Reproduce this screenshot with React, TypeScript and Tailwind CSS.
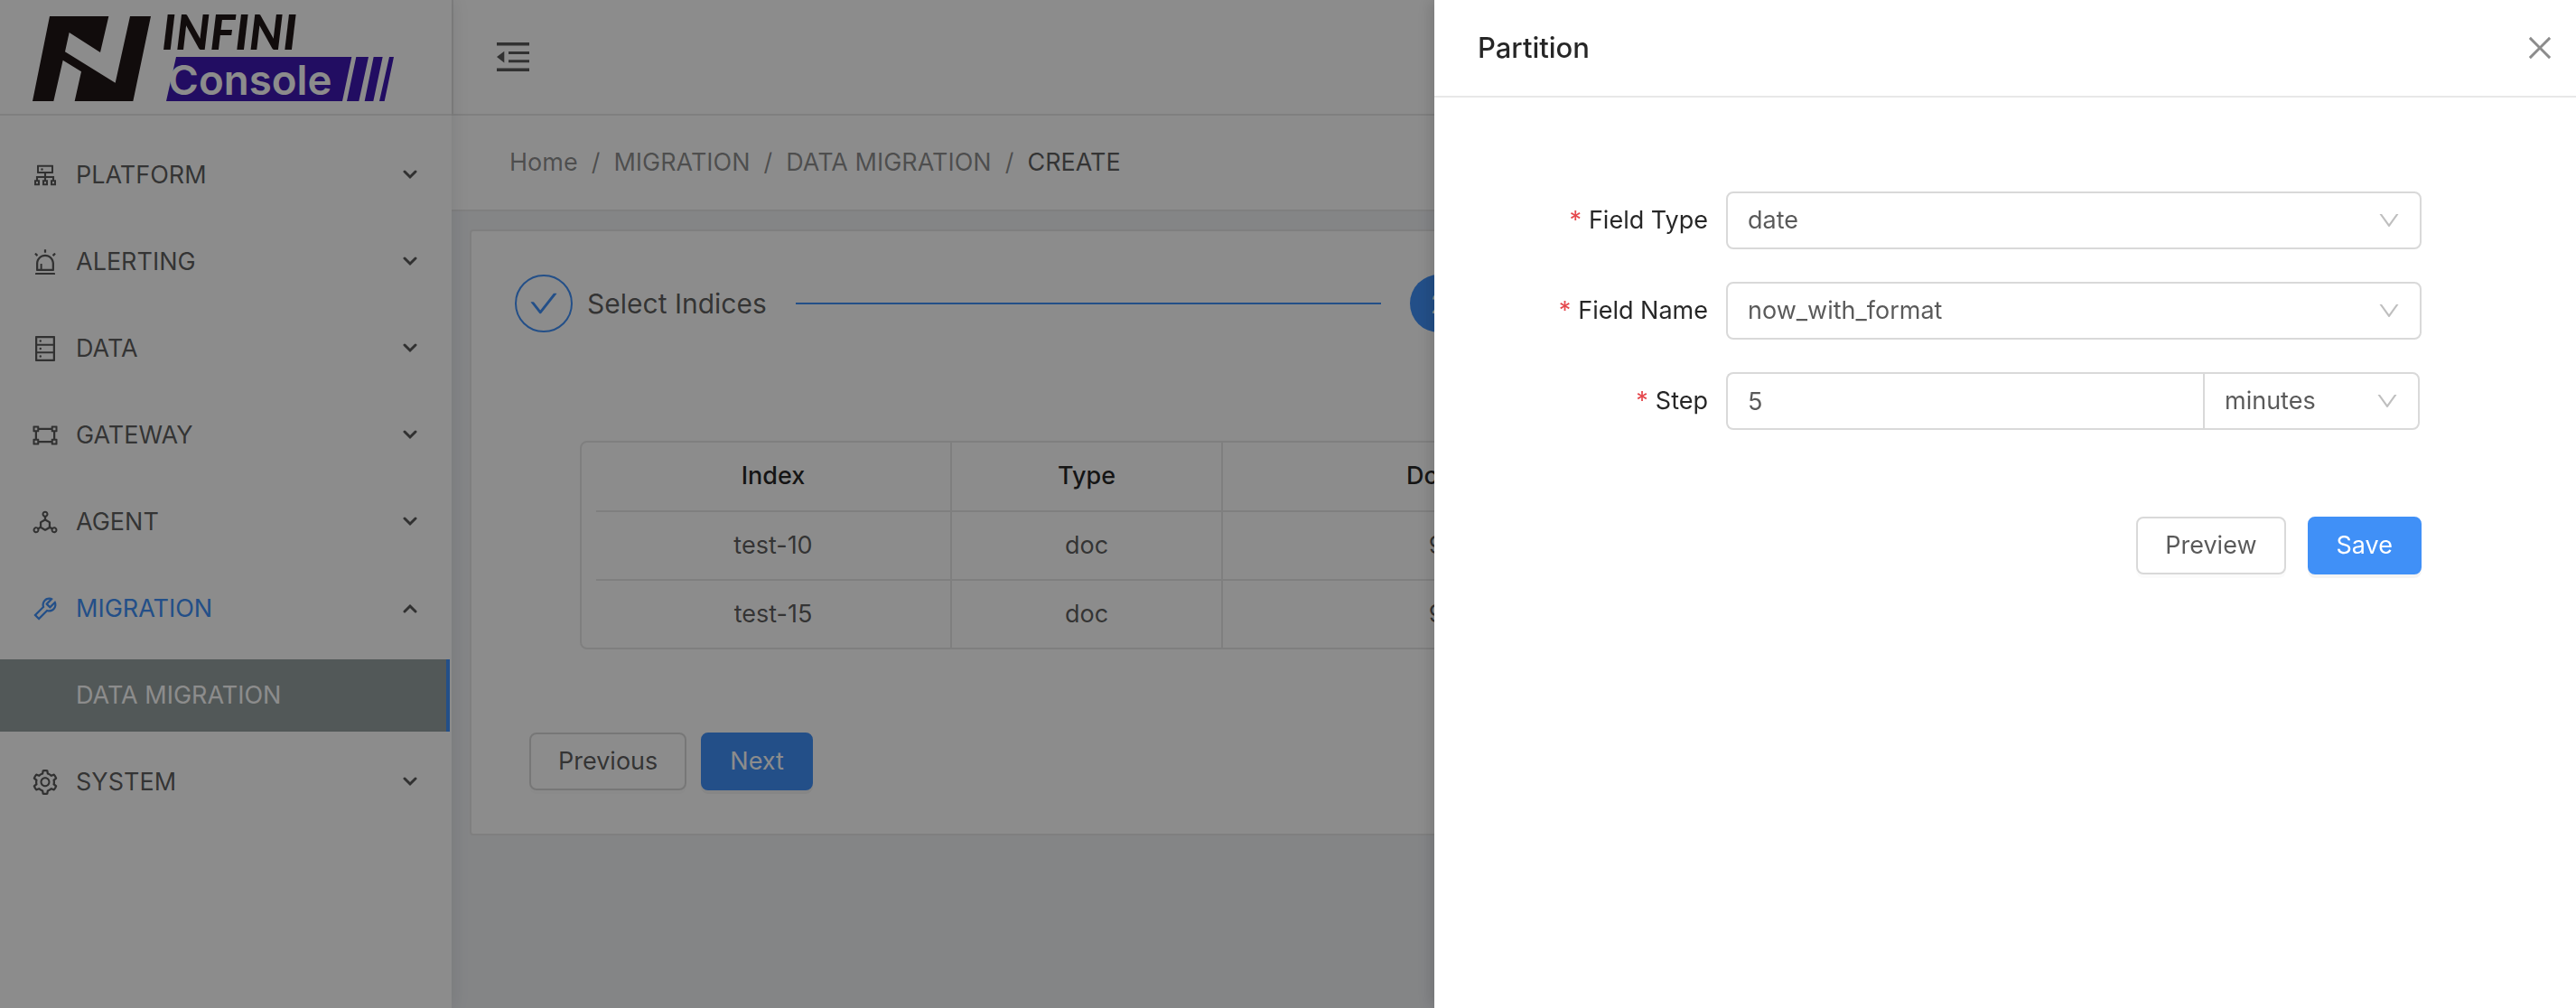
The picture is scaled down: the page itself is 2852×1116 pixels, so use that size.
import type { ReactNode } from "react";
import {
  AiOutlineAlert,
  AiOutlineCheck,
  AiOutlineClose,
  AiOutlineCluster,
  AiOutlineDatabase,
  AiOutlineDeploymentUnit,
  AiOutlineDown,
  AiOutlineGateway,
  AiOutlineSetting,
  AiOutlineTool,
} from "react-icons/ai";

function Logo() {
  return (
    <svg viewBox="0 0 1500 378" className="h-[126px] w-[500px]" role="img" aria-label="INFINI Console">
      <path
        fill="#201616"
        d="M165 54H361L333 174 230 108 216 172 383 275 432 54H501L442 336H248L270 238 209 200 178 336H108Z"
      />
      <path
        fill="#3e19b2"
        d="M585 189H1168L1137 336H552ZM1183 189H1224L1192 336H1152ZM1241 189H1271L1240 336H1211ZM1293 189H1308L1277 336H1260Z"
      />
      <text x="538" y="165" fill="#201616" fontSize="158" fontWeight="900" fontStyle="italic" fontFamily="Lato, sans-serif">
        INFINI
      </text>
      <text x="559" y="315" fill="#fff" fontSize="137" fontWeight="600" fontFamily="Inter, sans-serif">
        Console
      </text>
    </svg>
  );
}

function Arrow({ up = false }: { up?: boolean }) {
  return (
    <svg viewBox="0 0 16 12" className="h-3 w-4" fill="none" stroke="#595959" strokeWidth="3" strokeLinecap="round" aria-hidden="true">
      {up ? <path d="M2 9 8 3l6 6" /> : <path d="M2 2l6 6 6-6" />}
    </svg>
  );
}

function MenuItem({ icon, label, open = false }: { icon: ReactNode; label: string; open?: boolean }) {
  return (
    <li className="my-4">
      <button
        type="button"
        aria-expanded={open}
        className={
          open
            ? "flex h-20 w-full items-center pr-[38px] pl-[34px] text-left text-[#4090f7]"
            : "flex h-20 w-full items-center pr-[38px] pl-[34px] text-left"
        }
      >
        <span className="mr-[18px] text-[32px]">{icon}</span>
        <span className="flex-1">{label}</span>
        <Arrow up={open} />
      </button>
      {open && (
        <a
          href="#data-migration"
          className="mt-4 mr-[2px] flex h-20 items-center border-r-4 border-[#4090f7] bg-[#95a0a0] pl-[84px] text-white"
        >
          DATA MIGRATION
        </a>
      )}
    </li>
  );
}

function Sidebar() {
  return (
    <aside className="relative z-10 w-[500px] shrink-0 bg-white shadow-[4px_0_16px_rgba(0,21,41,0.08)]">
      <div className="h-32 border-b-2 border-[#e8e8e8]">
        <Logo />
      </div>
      <nav aria-label="Main" className="pt-[10px]">
        <ul>
          <MenuItem icon={<AiOutlineCluster />} label="PLATFORM" />
          <MenuItem icon={<AiOutlineAlert />} label="ALERTING" />
          <MenuItem icon={<AiOutlineDatabase />} label="DATA" />
          <MenuItem icon={<AiOutlineGateway />} label="GATEWAY" />
          <MenuItem icon={<AiOutlineDeploymentUnit />} label="AGENT" />
          <MenuItem icon={<AiOutlineTool />} label="MIGRATION" open />
          <MenuItem icon={<AiOutlineSetting />} label="SYSTEM" />
        </ul>
      </nav>
    </aside>
  );
}

function Header() {
  return (
    <header className="flex h-32 items-center border-b-2 border-l-2 border-[#e8e8e8] bg-white pl-12 shadow-[0_2px_8px_rgba(0,21,41,0.08)]">
      <button type="button" aria-label="Collapse menu">
        <svg viewBox="0 0 36 32" className="h-8 w-9" fill="#595959" aria-hidden="true">
          <path d="M0 0h36v3.600H0zM13 10h23v3H13zM13 19.300h23v3H13zM0 28.400h36v3.600H0zM8.300 9.800v12.600L0 16z" />
        </svg>
      </button>
    </header>
  );
}

function Breadcrumb() {
  const links = ["Home", "MIGRATION", "DATA MIGRATION"];
  return (
    <nav aria-label="Breadcrumb" className="border-b-2 border-[#e8e8e8] bg-white px-16 py-[30px]">
      <ol className="flex leading-[44px] text-black/45">
        {links.map((link) => (
          <li key={link}>
            <a href="#">{link}</a>
            <span className="mx-[15px]">/</span>
          </li>
        ))}
        <li className="text-black/65" aria-current="page">
          CREATE
        </li>
      </ol>
    </nav>
  );
}

function Steps() {
  return (
    <ol className="grid grid-cols-[1fr_1fr_230px] text-[30px]">
      <li className="flex items-center gap-4 pr-8">
        <span className="flex size-16 shrink-0 items-center justify-center rounded-full border-2 border-[#4090f7] text-[36px] text-[#4090f7]">
          <AiOutlineCheck />
        </span>
        <span className="pr-4">Select Indices</span>
        <span className="h-[2px] flex-1 bg-[#4090f7]" />
      </li>
      <li className="flex items-center" aria-current="step">
        <span className="flex size-16 items-center justify-center rounded-full bg-[#4090f7] text-white">2</span>
      </li>
    </ol>
  );
}

const rows = [
  { index: "test-10", type: "doc", docs: "9" },
  { index: "test-15", type: "doc", docs: "9" },
];

function IndexTable() {
  return (
    <div className="mx-[72px] mt-[120px] rounded-lg border-2 border-[#e8e8e8] pl-4">
      <table className="w-full table-fixed text-center">
        <colgroup>
          <col className="w-[393px]" />
          <col className="w-[300px]" />
          <col className="w-[474px]" />
          <col />
        </colgroup>
        <thead>
          <tr className="h-[76px] border-b-2 border-[#e8e8e8] text-black/85">
            <th className="border-r-2 border-[#e8e8e8] font-medium">Index</th>
            <th className="border-r-2 border-[#e8e8e8] font-medium">Type</th>
            <th className="border-r-2 border-[#e8e8e8] font-medium">Docs</th>
            <td />
          </tr>
        </thead>
        <tbody>
          {rows.map((row) => (
            <tr key={row.index} className="h-[76px] border-b-2 border-[#e8e8e8] last:h-[75px] last:border-b-0">
              <td className="border-r-2 border-[#e8e8e8]">{row.index}</td>
              <td className="border-r-2 border-[#e8e8e8]">{row.type}</td>
              <td className="border-r-2 border-[#e8e8e8]">{row.docs}</td>
              <td />
            </tr>
          ))}
        </tbody>
      </table>
    </div>
  );
}

function Button({ children, primary = false }: { children: ReactNode; primary?: boolean }) {
  return (
    <button
      type="button"
      className={
        primary
          ? "h-16 rounded-lg border-2 border-[#4090f7] bg-[#4090f7] px-[30px] text-white shadow-[0_4px_0_rgba(0,0,0,0.045)]"
          : "h-16 rounded-lg border-2 border-[#d9d9d9] bg-white px-[30px] shadow-[0_4px_0_rgba(0,0,0,0.016)]"
      }
    >
      {children}
    </button>
  );
}

function Field({ id, label, children }: { id: string; label: string; children: ReactNode }) {
  return (
    <div className="grid grid-cols-[275fr_770fr_123fr] items-center">
      <label htmlFor={id} className="pr-5 text-right text-black/85">
        <span className="mr-2 text-[#e5484d]">*</span>
        {label}
      </label>
      {children}
    </div>
  );
}

function Select({ id, value, label, joined = false }: { id: string; value: string; label?: string; joined?: boolean }) {
  return (
    <div className={joined ? "relative w-60" : "relative"}>
      <select
        id={id}
        aria-label={label}
        defaultValue={value}
        className={
          joined
            ? "block h-16 w-full appearance-none rounded-r-lg border-2 border-[#d9d9d9] bg-white pr-16 pl-[22px]"
            : "block h-16 w-full appearance-none rounded-lg border-2 border-[#d9d9d9] bg-white pr-16 pl-[22px]"
        }
      >
        <option>{value}</option>
      </select>
      <AiOutlineDown className="pointer-events-none absolute top-[18px] right-[22px] size-7 text-black/25" />
    </div>
  );
}

function PartitionDrawer() {
  return (
    <section
      role="dialog"
      aria-label="Partition"
      className="fixed inset-y-0 right-0 z-30 w-[1264px] max-w-full bg-white shadow-[-4px_0_16px_rgba(0,0,0,0.15)]"
    >
      <div className="flex h-[108px] items-center justify-between border-b-2 border-[#e8e8e8] pr-[22px] pl-12">
        <h2 className="text-[31px] font-medium text-black/85">Partition</h2>
        <button type="button" aria-label="Close" className="text-[36px] text-black/45">
          <AiOutlineClose />
        </button>
      </div>
      <form className="flex flex-col gap-9 px-12 pt-[104px]">
        <Field id="field-type" label="Field Type">
          <Select id="field-type" value="date" />
        </Field>
        <Field id="field-name" label="Field Name">
          <Select id="field-name" value="now_with_format" />
        </Field>
        <Field id="step" label="Step">
          <div className="flex pr-[2px]">
            <input
              id="step"
              type="text"
              defaultValue="5"
              className="h-16 min-w-0 flex-1 rounded-l-lg border-2 border-r-0 border-[#d9d9d9] px-[22px]"
            />
            <Select id="step-unit" value="minutes" label="Step unit" joined />
          </div>
        </Field>
        <div className="mt-[60px] grid grid-cols-[1045fr_123fr]">
          <div className="flex justify-end gap-6">
            <Button>Preview</Button>
            <Button primary>Save</Button>
          </div>
        </div>
      </form>
    </section>
  );
}

export default function App() {
  return (
    <div className="flex min-h-screen bg-[#f0f2f5] font-[Inter,sans-serif] text-[27px] text-black/65">
      <Sidebar />
      <div className="min-w-0 flex-1">
        <Header />
        <Breadcrumb />
        <main className="m-5 rounded border-2 border-[#e8e8e8] bg-white px-12 py-12">
          <Steps />
          <IndexTable />
          <div className="mt-[92px] flex gap-4 pl-4">
            <Button>Previous</Button>
            <Button primary>Next</Button>
          </div>
        </main>
      </div>
      <div className="fixed inset-0 z-20 bg-black/45" />
      <PartitionDrawer />
    </div>
  );
}
